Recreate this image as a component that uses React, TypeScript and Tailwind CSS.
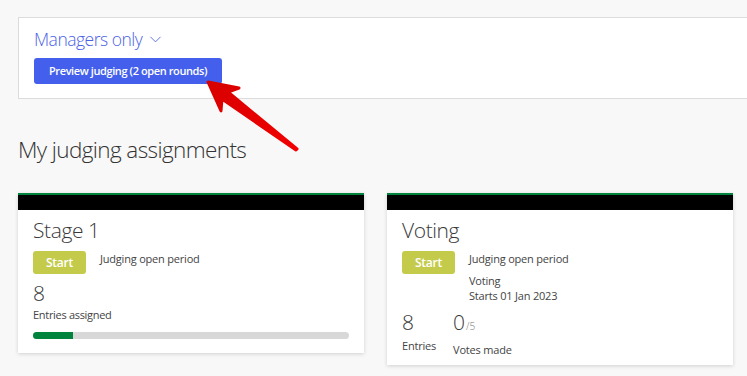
import { ChevronDown } from 'lucide-react';

/** Kartu penugasan penjurian */
function AssignmentCard({ children, bottom = 'pb-[14px]' }: { children: React.ReactNode; bottom?: string }) {
    return (
        <div className="w-[346px] bg-white shadow-[0_1px_4px_rgba(0,0,0,0.16)]">
            <div className="h-[17px] border-t-2 border-[#00843d] bg-black" />
            <div className={`px-[15px] ${bottom}`}>{children}</div>
        </div>
    );
}

function StartButton() {
    return (
        <button
            type="button"
            className="h-[23px] w-[53px] shrink-0 rounded-[3px] bg-[#c4cb4b] text-[12px] font-semibold tracking-[-0.2px] text-white"
        >
            Start
        </button>
    );
}

/** Panah merah penunjuk tombol preview */
function RedArrow() {
    return (
        <svg className="pointer-events-none absolute top-0 left-0" width="747" height="376" viewBox="0 0 747 376">
            <defs>
                <linearGradient id="arrowFill" x1="0" y1="0" x2="1" y2="1">
                    <stop offset="0" stopColor="#d80000" />
                    <stop offset="1" stopColor="#f20000" />
                </linearGradient>
            </defs>
            <polygon
                points="208,82 239,88 228,92 297,149 296,150 222,99 221,111"
                fill="url(#arrowFill)"
                stroke="url(#arrowFill)"
                strokeWidth="3"
                strokeLinejoin="round"
            />
        </svg>
    );
}

export default function App() {
    return (
        <div className="relative h-[376px] overflow-hidden bg-[#f8f8f8] pt-[17px] pl-[18px] font-['Open_Sans',sans-serif] text-[#333]">
            {/* Panel khusus manajer */}
            <div className="-mr-[10px] border border-[#dcdcdc] bg-white pt-[9px] pb-[14px] pl-[15px]">
                <div className="flex items-center gap-[4px] text-[17.5px] leading-[24px] font-light tracking-[-0.5px] text-[#4b62e6]">
                    Managers only
                    <ChevronDown className="h-[19px] w-[19px]" strokeWidth={1.1} />
                </div>
                <button
                    type="button"
                    className="mt-[7px] h-[26px] rounded-[3px] bg-[#435fec] px-[15px] text-[11px] font-semibold tracking-[-0.4px] text-white"
                >
                    Preview judging (2 open rounds)
                </button>
            </div>

            <h1 className="mt-[36px] text-[22.5px] leading-[30px] font-light tracking-[-0.6px] text-[#333]">
                My judging assignments
            </h1>

            {/* Daftar kartu */}
            <div className="mt-[28px] flex items-start gap-[23px]">
                <AssignmentCard>
                    <div className="pt-[6px] text-[21px] leading-[28px] font-light tracking-[-0.4px] text-[#3a3a3a]">
                        Stage 1
                    </div>
                    <div className="mt-[7px] flex gap-[14px]">
                        <StartButton />
                        <p className="text-[11px] leading-[16px] tracking-[-0.2px] text-[#444]">Judging open period</p>
                    </div>
                    <div className="mt-[6px] text-[21px] leading-[26px] font-light text-[#3a3a3a]">8</div>
                    <p className="mt-[1px] text-[11px] leading-[16px] tracking-[-0.3px] text-[#444]">Entries assigned</p>
                    <div className="mt-[9px] h-[7px] w-full overflow-hidden rounded-full bg-[#d8d8d8]">
                        <div className="h-full w-[12.5%] bg-[#00843d]" />
                    </div>
                </AssignmentCard>

                <AssignmentCard bottom="pb-[7px]">
                    <div className="pt-[6px] text-[21px] leading-[28px] font-light tracking-[-0.4px] text-[#3a3a3a]">
                        Voting
                    </div>
                    <div className="mt-[7px] flex gap-[14px]">
                        <StartButton />
                        <div className="text-[11px] leading-[16px] tracking-[-0.2px] text-[#444]">
                            <p>Judging open period</p>
                            <p className="mt-[6px] leading-[15px]">Voting</p>
                            <p className="leading-[15px]">Starts 01 Jan 2023</p>
                        </div>
                    </div>
                    <div className="mt-[6px] flex gap-[19px]">
                        <div>
                            <div className="text-[21px] leading-[26px] font-light text-[#3a3a3a]">8</div>
                            <p className="mt-[3px] text-[11px] leading-[16px] tracking-[-0.2px] text-[#444]">Entries</p>
                        </div>
                        <div className="-ml-[2px]">
                            <div className="text-[21px] leading-[26px] font-light text-[#3a3a3a]">
                                0<span className="ml-[1px] text-[10px] text-[#777]">/5</span>
                            </div>
                            <p className="mt-[3px] text-[11px] leading-[16px] tracking-[-0.2px] text-[#444]">
                                Votes made
                            </p>
                        </div>
                    </div>
                </AssignmentCard>
            </div>

            <RedArrow />
        </div>
    );
}
